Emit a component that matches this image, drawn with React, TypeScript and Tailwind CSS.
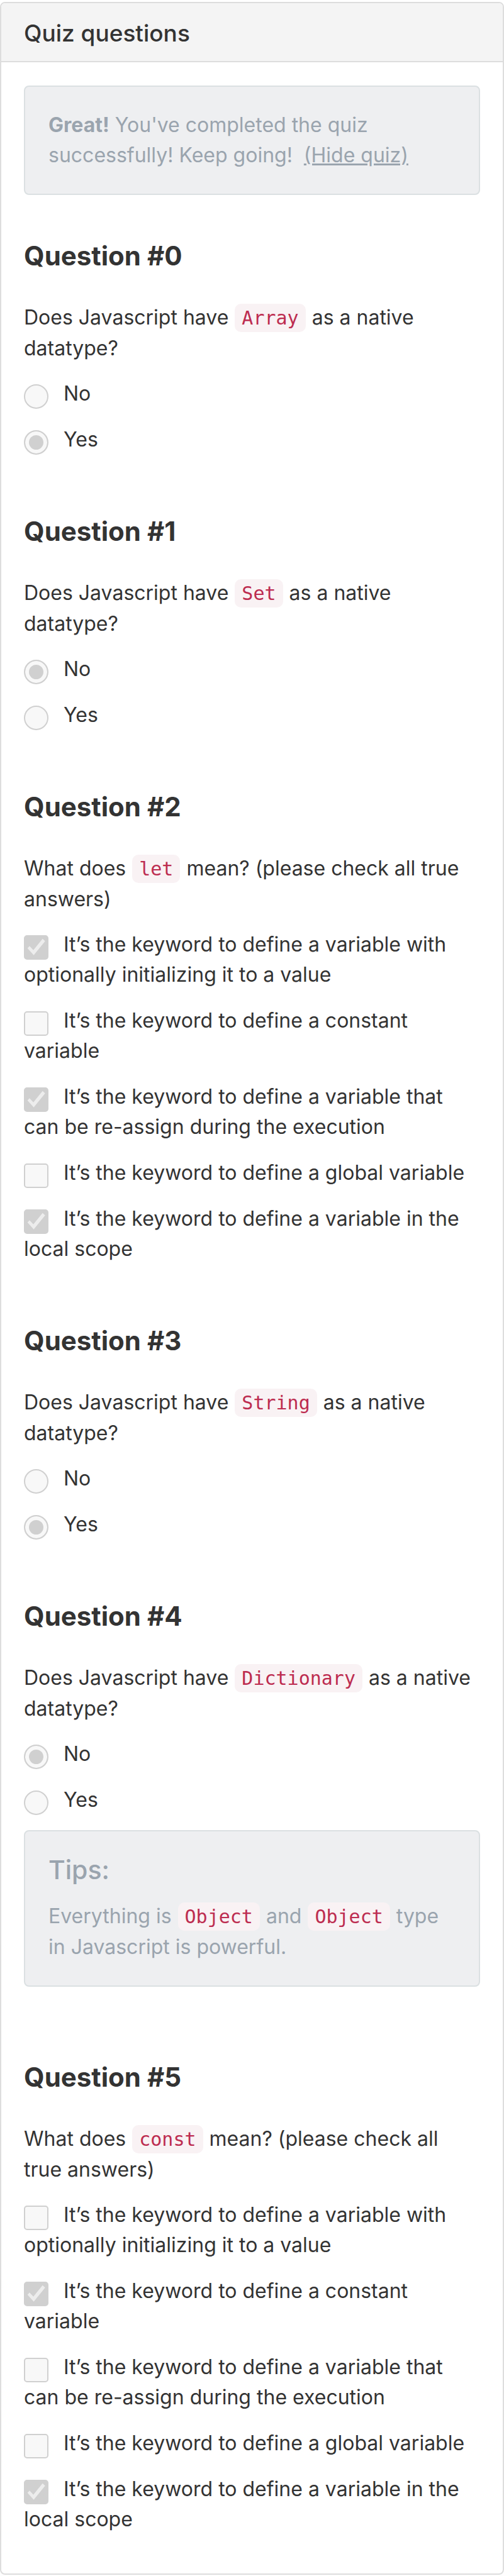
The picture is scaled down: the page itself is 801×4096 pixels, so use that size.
import type { ReactNode } from "react";

type Option = { text: string; checked?: boolean };
type QuestionData = {
  kind: "radio" | "checkbox";
  prompt: ReactNode;
  options: Option[];
  tip?: ReactNode;
};

function Code({ children }: { children: ReactNode }) {
  return (
    <code className="mx-px rounded-[10px] bg-[#f9f2f4] px-[11px] py-[5px] font-['DejaVu_Sans_Mono',monospace] text-[30px] leading-none text-[#bd2c50]">
      {children}
    </code>
  );
}

function Panel({ children }: { children: ReactNode }) {
  return (
    <div className="rounded-lg border-2 border-[#dbe0e2] bg-[#eeeff1] p-[37px] text-[#9aa4ae]">
      {children}
    </div>
  );
}

function OptionRow({ kind, name, option }: { kind: "radio" | "checkbox"; name: string; option: Option }) {
  return (
    <label className="block">
      <span className="relative mr-6 inline-block size-[39px] align-bottom">
        {kind === "radio" ? (
          <input
            type="radio"
            name={name}
            disabled
            defaultChecked={option.checked}
            className="block size-full appearance-none rounded-full border-2 border-[#d0d0d0] bg-[#f8f8f8] checked:bg-[#d0d0d0] checked:shadow-[inset_0_0_0_6px_#f8f8f8]"
          />
        ) : (
          <>
            <input
              type="checkbox"
              name={name}
              disabled
              defaultChecked={option.checked}
              className="peer block size-full appearance-none rounded-[5px] border-2 border-[#d0d0d0] bg-[#f8f8f8] checked:bg-[#d0d0d0]"
            />
            <svg
              viewBox="0 0 48 48"
              aria-hidden="true"
              className="pointer-events-none absolute inset-0 hidden size-full fill-[#ededed] peer-checked:block"
            >
              <path d="M7 25.5 L11 21.3 L18.5 29.3 L36.5 7 L41.5 11.8 L19.2 39 Z" />
            </svg>
          </>
        )}
      </span>
      {option.text}
    </label>
  );
}

function Question({ index, data }: { index: number; data: QuestionData }) {
  return (
    <section>
      <h3 className="text-[42px] leading-[50px] font-bold">Question #{index}</h3>
      <p className="mt-12 pr-2 leading-[49px]">{data.prompt}</p>
      <div className="mt-6 flex flex-col gap-[25px]">
        {data.options.map((option) => (
          <OptionRow key={option.text} kind={data.kind} name={`question-${index}`} option={option} />
        ))}
      </div>
      {data.tip && (
        <div className="mt-6 mb-[22px]">
          <Panel>
            <h4 className="text-[41px] leading-12 font-medium">Tips:</h4>
            <p className="mt-[25px] leading-[49px]">{data.tip}</p>
          </Panel>
        </div>
      )}
    </section>
  );
}

const nativeDatatype = (type: string) => (
  <>
    Does Javascript have <Code>{type}</Code> as a native datatype?
  </>
);

const keywordMeaning = (keyword: string) => (
  <>
    What does <Code>{keyword}</Code> mean? (please check all true answers)
  </>
);

const yesNo = (answer: "Yes" | "No"): Option[] => [
  { text: "No", checked: answer === "No" },
  { text: "Yes", checked: answer === "Yes" },
];

const keywordOptions = (checked: boolean[]): Option[] =>
  [
    "It’s the keyword to define a variable with optionally initializing it to a value",
    "It’s the keyword to define a constant variable",
    "It’s the keyword to define a variable that can be re-assign during the execution",
    "It’s the keyword to define a global variable",
    "It’s the keyword to define a variable in the local scope",
  ].map((text, i) => ({ text, checked: checked[i] }));

const questions: QuestionData[] = [
  { kind: "radio", prompt: nativeDatatype("Array"), options: yesNo("Yes") },
  { kind: "radio", prompt: nativeDatatype("Set"), options: yesNo("No") },
  { kind: "checkbox", prompt: keywordMeaning("let"), options: keywordOptions([true, false, true, false, true]) },
  { kind: "radio", prompt: nativeDatatype("String"), options: yesNo("Yes") },
  {
    kind: "radio",
    prompt: nativeDatatype("Dictionary"),
    options: yesNo("No"),
    tip: (
      <>
        Everything is <Code>Object</Code> and <Code>Object</Code> type in Javascript is powerful.
      </>
    ),
  },
  { kind: "checkbox", prompt: keywordMeaning("const"), options: keywordOptions([false, true, false, false, true]) },
];

export default function App() {
  return (
    <main className="bg-white pt-[3px] pb-[2px] font-['Inter',sans-serif] text-[32px] leading-12 text-[#333333]">
      <div className="overflow-hidden rounded-lg border-2 border-[#dddddd]">
        <header className="border-b-2 border-[#dddddd] bg-[#f4f4f4] px-9 pt-6 pb-5">
          <h2 className="text-[37px] leading-12 font-medium">Quiz questions</h2>
        </header>
        <div className="px-9 pt-[37px] pb-[62px]">
          <Panel>
            <p>
              <strong className="font-bold">Great!</strong> You've completed the quiz successfully! Keep going!&nbsp;{" "}
              <a href="#quiz" className="underline">
                (Hide quiz)
              </a>
            </p>
          </Panel>
          <div id="quiz" className="mt-[72px] flex flex-col gap-[97px]">
            {questions.map((data, index) => (
              <Question key={index} index={index} data={data} />
            ))}
          </div>
        </div>
      </div>
    </main>
  );
}
